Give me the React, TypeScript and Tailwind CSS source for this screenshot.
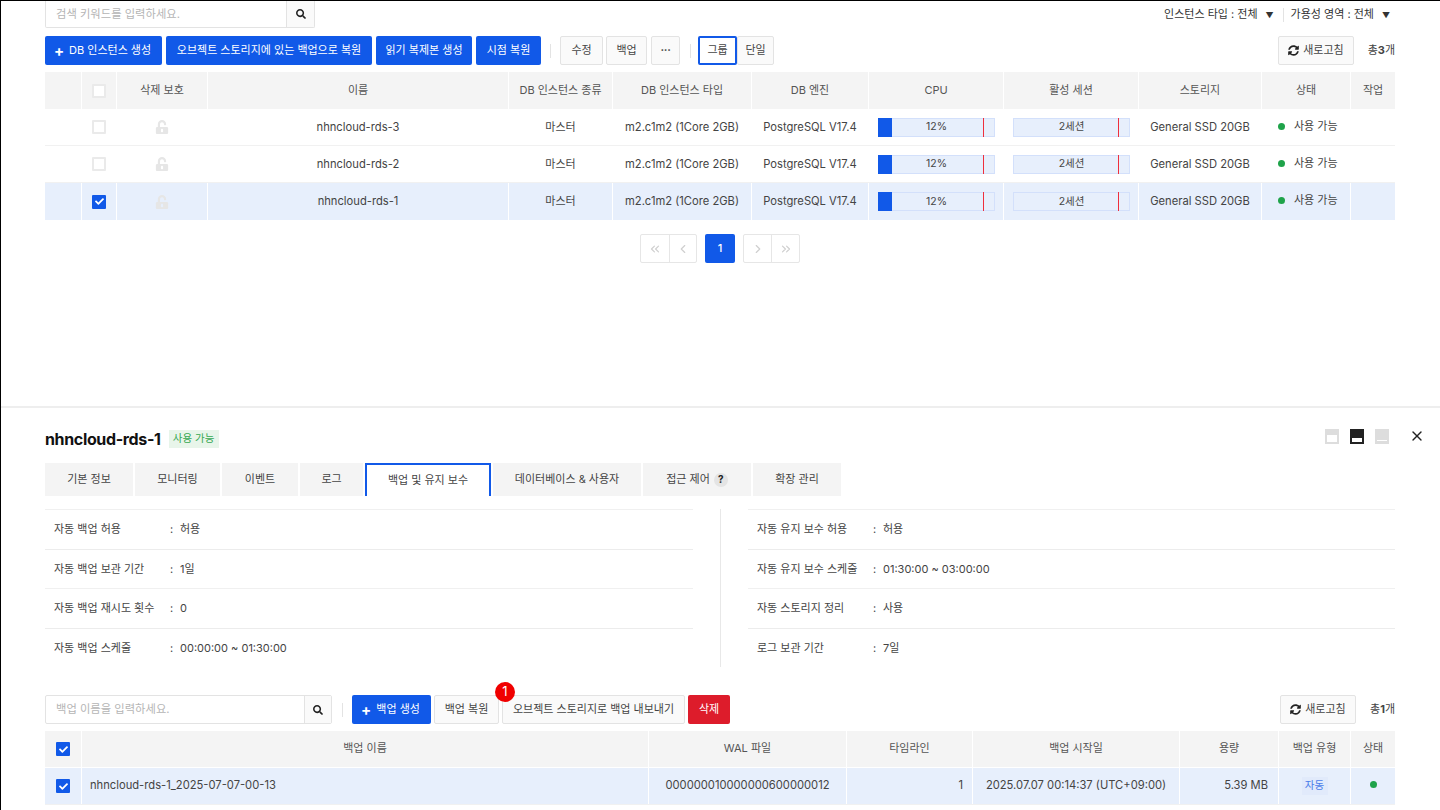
import React from "react";
import { FaSearch, FaSyncAlt, FaUnlockAlt, FaCheck } from "react-icons/fa";
import { ChevronLeft, ChevronRight, ChevronsLeft, ChevronsRight, X } from "lucide-react";

const font = "font-['Inter','Noto_Sans_CJK_KR','Liberation_Sans',sans-serif]";
const latin = "text-[11.2px]";

function Btn({ children, className = "" }: { children: React.ReactNode; className?: string }) {
  return (
    <div className={`h-[29px] flex items-center justify-center rounded-[2px] border border-[#e3e3e3] bg-[#fafafa] text-[11px] text-[#444] whitespace-nowrap ${className}`}>
      {children}
    </div>
  );
}

function Primary({ children, className = "" }: { children: React.ReactNode; className?: string }) {
  return (
    <div className={`h-[29px] flex items-center justify-center rounded-[2px] bg-[#1159e8] text-[11px] text-white whitespace-nowrap ${className}`}>
      {children}
    </div>
  );
}

function Plus() {
  return <span className="-ml-[2px] mr-[5px] text-[15px] leading-none font-bold">+</span>;
}

function Check({ on }: { on: boolean }) {
  return on ? (
    <div className="w-[14px] h-[14px] rounded-[1px] bg-[#1159e8] flex items-center justify-center">
      <FaCheck className="text-white" size={9} />
    </div>
  ) : (
    <div className="w-[14px] h-[14px] rounded-[1px] border-2 border-[#eaeaea] bg-white" />
  );
}

function Gauge({ label, fill, mark }: { label: string; fill: boolean; mark: number }) {
  return (
    <div className="relative w-[117px] h-[19px] border border-[#d3e0fb] bg-[#e7effc] flex items-center justify-center text-[10.5px] text-[#444]">
      {fill && <div className="absolute left-[-1px] top-[-1px] bottom-[-1px] w-[14px] bg-[#1159e8]" />}
      <span>{label}</span>
      <div className="absolute top-[-1px] bottom-[-1px] w-px bg-[#ef2f3c]" style={{ left: mark }} />
    </div>
  );
}

const topCols = "grid-cols-[36px_34px_90px_300px_103px_138px_116px_134px_134px_122px_88px_44px]";
const topHead = ["", "check", "삭제 보호", "이름", "DB 인스턴스 종류", "DB 인스턴스 타입", "DB 엔진", "CPU", "활성 세션", "스토리지", "상태", "작업"];
const botCols = "grid-cols-[36px_566px_197px_125px_206px_98px_71px_44px]";

function Cell({ children, className = "" }: { children?: React.ReactNode; className?: string }) {
  return <div className={`flex items-center justify-center min-w-0 whitespace-nowrap ${className}`}>{children}</div>;
}

function Row({ name, selected }: { name: string; selected: boolean }) {
  const bg = selected ? "bg-[#e7effc]" : "bg-white";
  return (
    <div className={`grid ${topCols} gap-x-px h-[37px] ${selected ? "" : "border-b border-[#f1f1f1]"} text-[11px] text-[#444]`}>
      <Cell className={bg} />
      <Cell className={bg}><Check on={selected} /></Cell>
      <Cell className={bg}><FaUnlockAlt size={14} className="text-[#e6e6e6]" /></Cell>
      <Cell className={`${bg} ${latin}`}>{name}</Cell>
      <Cell className={bg}>마스터</Cell>
      <Cell className={`${bg} ${latin}`}>m2.c1m2 (1Core 2GB)</Cell>
      <Cell className={`${bg} ${latin}`}>PostgreSQL V17.4</Cell>
      <Cell className={`${bg} pl-[9px] justify-start`}><Gauge label="12%" fill mark={104} /></Cell>
      <Cell className={`${bg} pl-[9px] justify-start`}><Gauge label="2세션" fill={false} mark={104} /></Cell>
      <Cell className={`${bg} ${latin}`}>General SSD 20GB</Cell>
      <Cell className={`${bg} justify-start pl-[16px] pb-[2px]`}>
        <span className="w-[7px] h-[7px] rounded-full bg-[#1fa34a] mr-[9px]" />
        사용 가능
      </Cell>
      <Cell className={bg} />
    </div>
  );
}

function LayoutIcon({ fill, y, h }: { fill: string; y: number; h: number }) {
  return (
    <svg width="14" height="15" viewBox="0 0 14 15">
      <rect width="14" height="15" fill={fill} />
      <rect x="2" y={y} width="10" height={h} fill="#fff" />
    </svg>
  );
}

function InfoList({ rows, colon, className = "" }: { rows: [string, string][]; colon: string; className?: string }) {
  return (
    <div className={className}>
      {rows.map(([k, v], i) => (
        <div key={k} className={`h-[39.5px] flex items-center pl-[9px] text-[11px] text-[#444] border-t ${i % 2 === 0 ? "border-[#f0f0f0] " : "border-[#ececec]"}`}>
          <span className={`${colon} shrink-0 whitespace-nowrap`}>{k}</span>
          <span className="w-[10px] shrink-0">:</span>
          <span className="whitespace-nowrap">{v}</span>
        </div>
      ))}
    </div>
  );
}

function Tab({ children, className = "", active = false }: { children: React.ReactNode; className?: string; active?: boolean }) {
  return (
    <div className={`h-[33px] flex items-center justify-center text-[11px] text-[#444] whitespace-nowrap ${active ? "bg-white border-2 border-b-0 border-[#1159e8]" : "bg-[#f4f4f4]"} ${className}`}>
      {children}
    </div>
  );
}

function PageBtn({ children, className = "" }: { children: React.ReactNode; className?: string }) {
  return <div className={`h-[27px] flex items-center justify-center text-[#cfcfcf] ${className}`}>{children}</div>;
}

export default function App() {
  return (
    <div className={`${font} w-[1440px] h-[810px] overflow-hidden bg-white border-l border-t border-black box-border`}>
      <div className="h-[405px] pl-[44px] pr-[45px]">
        <div className="h-[27px] flex items-center justify-between">
          <div className="flex h-[27px] w-[270px] border border-t-0 border-[#e3e3e3] rounded-b-[2px]">
            <div className="flex-1 flex items-center pl-[10px] text-[11.3px] text-[#b5b5b5]">검색 키워드를 입력하세요.</div>
            <div className="w-[28px] bg-[#fafafa] border-l border-[#e3e3e3] flex items-center justify-center">
              <FaSearch size={10} className="text-[#222]" />
            </div>
          </div>
          <div className="flex items-center text-[11px] text-[#333] mr-[5px]">
            <span>인스턴스 타입 : 전체</span>
            <span className="ml-[8px] text-[8px]">▼</span>
            <span className="mx-[7px] w-px h-[14px] bg-[#e3e3e3] ml-[9px]" />
            <span>가용성 영역 : 전체</span>
            <span className="ml-[8px] text-[8px]">▼</span>
          </div>
        </div>

        <div className="mt-[8px] flex items-center">
          <Primary className="w-[117px]"><Plus />DB 인스턴스 생성</Primary>
          <Primary className="w-[206px] ml-[4px]">오브젝트 스토리지에 있는 백업으로 복원</Primary>
          <Primary className="w-[96px] ml-[4px]">읽기 복제본 생성</Primary>
          <Primary className="w-[65px] ml-[4px]">시점 복원</Primary>
          <div className="w-px h-[14px] bg-[#e3e3e3] ml-[9px] mr-[9px]" />
          <Btn className="w-[43px]">수정</Btn>
          <Btn className="w-[41px] ml-[3px]">백업</Btn>
          <Btn className="w-[29px] ml-[4px] font-bold tracking-tight">···</Btn>
          <div className="w-px h-[14px] bg-[#e3e3e3] ml-[10px] mr-[7px]" />
          <div className="w-[39px] h-[29px] border-2 border-[#1159e8] rounded-[2px] flex items-center justify-center text-[11px] text-[#444]">그룹</div>
          <Btn className="w-[37px]">단일</Btn>
          <div className="flex-1" />
          <Btn className="w-[76px]"><FaSyncAlt size={11} className="text-[#222] mr-[4px]" />새로고침</Btn>
          <div className="w-[41px] text-right text-[11px] text-[#444] whitespace-nowrap">총<b>3</b>개</div>
        </div>

        <div className="mt-[7px]">
          <div className={`grid ${topCols} gap-x-px h-[37px] text-[11px] text-[#555]`}>
            {topHead.map((h, i) => (
              <Cell key={i} className="bg-[#f4f4f4]">{h === "check" ? <Check on={false} /> : h}</Cell>
            ))}
          </div>
          <Row name="nhncloud-rds-3" selected={false} />
          <Row name="nhncloud-rds-2" selected={false} />
          <Row name="nhncloud-rds-1" selected />
        </div>

        <div className="mt-[14px] flex justify-center">
          <div className="flex border border-[#e6e6e6] rounded-[2px] h-[29px]">
            <PageBtn className="w-[28px]"><ChevronsLeft size={14} /></PageBtn>
            <PageBtn className="w-[27px] border-l border-[#e6e6e6]"><ChevronLeft size={14} /></PageBtn>
          </div>
          <div className="mx-[8px] w-[30px] h-[29px] rounded-[2px] bg-[#1159e8] text-white text-[11px] font-medium flex items-center justify-center">1</div>
          <div className="flex border border-[#e6e6e6] rounded-[2px] h-[29px]">
            <PageBtn className="w-[27px]"><ChevronRight size={14} /></PageBtn>
            <PageBtn className="w-[28px] border-l border-[#e6e6e6]"><ChevronsRight size={14} /></PageBtn>
          </div>
        </div>
      </div>

      <div className="h-[2px] bg-[#eeeeee]" />

      <div className="pl-[44px] pr-[45px]">
        <div className="h-[55px] flex items-center justify-between pt-[6px] relative">
          <div className="flex items-center">
            <span className="text-[16px] font-bold text-[#111] tracking-[-0.35px]">nhncloud-rds-1</span>
            <span className="ml-[8px] w-[50px] h-[18px] bg-[#e8f5ea] text-[#36a852] text-[10.5px] flex items-center justify-center">사용 가능</span>
          </div>
          <div className="absolute right-[-30px] top-[20px] flex items-center">
            <LayoutIcon fill="#dddddd" y={6} h={7} />
            <div className="w-[11px]" />
            <LayoutIcon fill="#222222" y={9} h={4} />
            <div className="w-[11px]" />
            <LayoutIcon fill="#dddddd" y={11} h={1} />
            <X size={16} className="ml-[20px] text-[#222]" />
          </div>
        </div>

        <div className="flex gap-x-[2px]">
          <Tab className="w-[88px]">기본 정보</Tab>
          <Tab className="w-[85px]">모니터링</Tab>
          <Tab className="w-[76px]">이벤트</Tab>
          <Tab className="w-[63px]">로그</Tab>
          <Tab active className="w-[126px]">백업 및 유지 보수</Tab>
          <Tab className="w-[148px]">데이터베이스 &amp; 사용자</Tab>
          <Tab className="w-[108px]">접근 제어
            <span className="ml-[4px] w-[14px] h-[14px] rounded-full bg-[#e4e4e4] text-[10px] font-bold text-[#222] flex items-center justify-center">?</span>
          </Tab>
          <Tab className="w-[88px]">확장 관리</Tab>
        </div>

        <div className="mt-[13px] flex">
          <InfoList
            className="w-[648px]"
            colon="w-[116px]"
            rows={[
              ["자동 백업 허용", "허용"],
              ["자동 백업 보관 기간", "1일"],
              ["자동 백업 재시도 횟수", "0"],
              ["자동 백업 스케줄", "00:00:00 ~ 01:30:00"],
            ]}
          />
          <div className="w-px bg-[#e8e8e8] ml-[27px] mr-[27px]" />
          <InfoList
            className="w-[647px]"
            colon="w-[116px]"
            rows={[
              ["자동 유지 보수 허용", "허용"],
              ["자동 유지 보수 스케줄", "01:30:00 ~ 03:00:00"],
              ["자동 스토리지 정리", "사용"],
              ["로그 보관 기간", "7일"],
            ]}
          />
        </div>

        <div className="mt-[28px] flex items-center">
          <div className="flex h-[29px] w-[287px] border border-[#e3e3e3] rounded-[2px]">
            <div className="flex-1 flex items-center pl-[10px] text-[11.3px] text-[#b5b5b5]">백업 이름을 입력하세요.</div>
            <div className="w-[27px] bg-[#fafafa] border-l border-[#e3e3e3] flex items-center justify-center">
              <FaSearch size={10} className="text-[#222]" />
            </div>
          </div>
          <div className="w-px h-[14px] bg-[#e3e3e3] ml-[10px] mr-[9px]" />
          <Primary className="w-[79px]"><Plus />백업 생성</Primary>
          <Btn className="w-[65px] ml-[3px]">백업 복원</Btn>
          <div className="relative ml-[3px]">
            <Btn className="w-[183px]">오브젝트 스토리지로 백업 내보내기</Btn>
            <div className="absolute left-[-7px] top-[-13px] w-[20px] h-[20px] rounded-full bg-[#f00000] text-white text-[13px] flex items-center justify-center">1</div>
          </div>
          <div className="ml-[3px] w-[42px] h-[29px] rounded-[2px] bg-[#dd1c2b] text-white text-[11px] flex items-center justify-center">삭제</div>
          <div className="flex-1" />
          <Btn className="w-[76px]"><FaSyncAlt size={11} className="text-[#222] mr-[4px]" />새로고침</Btn>
          <div className="w-[39px] text-right text-[11px] text-[#444] whitespace-nowrap">총<b>1</b>개</div>
        </div>

        <div className="mt-[7px]">
          <div className={`grid ${botCols} gap-x-px h-[36px] text-[11px] text-[#555]`}>
            {["", "백업 이름", "WAL 파일", "타임라인", "백업 시작일", "용량", "백업 유형", "상태"].map((h, i) => (
              <Cell key={i} className={`bg-[#f4f4f4] ${i === 0 ? "" : "pb-px"}`}>{i === 0 ? <Check on /> : h}</Cell>
            ))}
          </div>
          <div className={`grid ${botCols} gap-x-px h-[37px] mt-px text-[11.2px] text-[#444] border-b border-[#f1f1f1]`}>
            <Cell className="bg-[#e7effc]"><Check on /></Cell>
            <Cell className="bg-[#e7effc] justify-start pl-[8px] pb-px">nhncloud-rds-1_2025-07-07-00-13</Cell>
            <Cell className="bg-[#e7effc] pb-px">000000010000000600000012</Cell>
            <Cell className="bg-[#e7effc] justify-end pr-[9px] pb-px">1</Cell>
            <Cell className="bg-[#e7effc] pb-px">2025.07.07 00:14:37 (UTC+09:00)</Cell>
            <Cell className="bg-[#e7effc] justify-end pr-[10px] pb-px">5.39 MB</Cell>
            <Cell className="bg-[#e7effc]">
              <span className="w-[26px] h-[18px] bg-[#e1eafb] text-[#4a7dea] text-[10.5px] flex items-center justify-center">자동</span>
            </Cell>
            <Cell className="bg-[#e7effc] pb-[3px]"><span className="w-[7px] h-[7px] rounded-full bg-[#1fa34a]" /></Cell>
          </div>
        </div>
      </div>
    </div>
  );
}
